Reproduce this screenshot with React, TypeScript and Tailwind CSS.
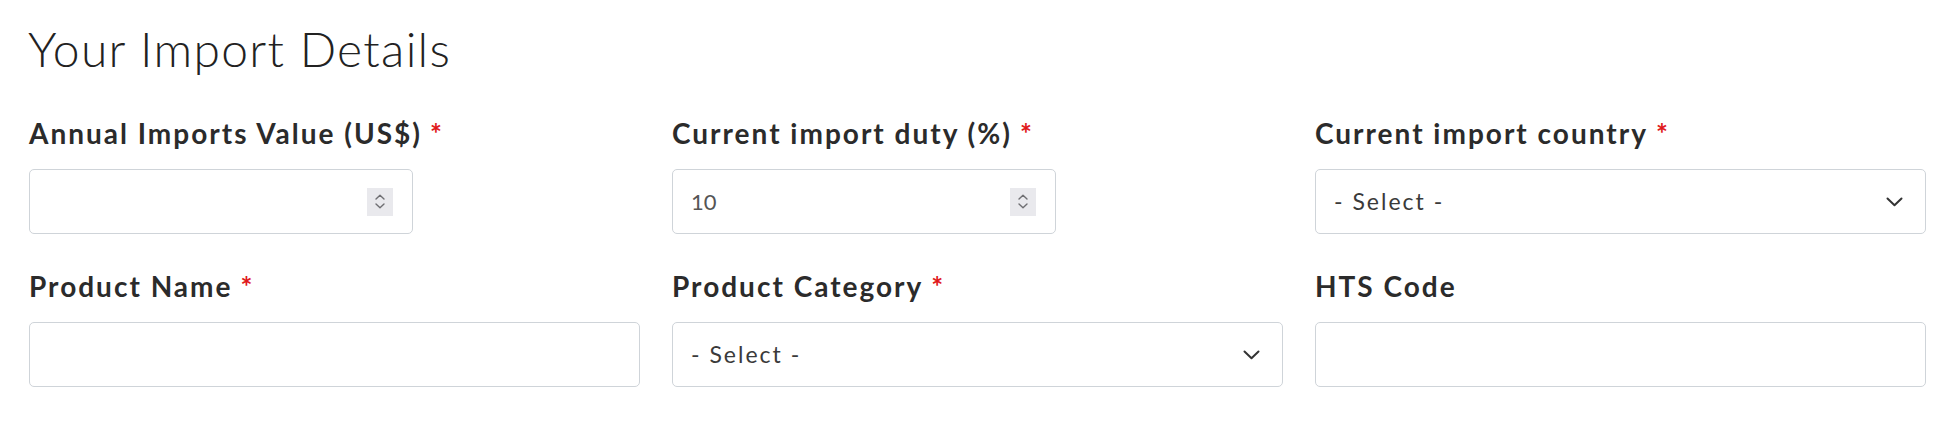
import React from "react";

const font = { fontFamily: "Lato, 'Open Sans', sans-serif" };

function Label({ text, required }: { text: string; required?: boolean }) {
  return (
    <div className="h-[28px] text-[28px] leading-[28px] font-bold tracking-[2px] text-[#2b2b2b] whitespace-nowrap">
      {text}
      {required && <span className="text-[#e0181b] ml-[8px] tracking-normal">*</span>}
    </div>
  );
}

function Spinner() {
  return (
    <div className="absolute right-[19px] top-1/2 -translate-y-1/2 w-[26px] h-[28px] bg-[#e9e9ed] flex flex-col items-center justify-center gap-[3px]">
      <svg width="10" height="6" viewBox="0 0 10 6" fill="none">
        <path d="M1 5L5 1.2L9 5" stroke="#6f6f73" strokeWidth="1.4" strokeLinecap="round" strokeLinejoin="round" />
      </svg>
      <svg width="10" height="6" viewBox="0 0 10 6" fill="none">
        <path d="M1 1L5 4.8L9 1" stroke="#6f6f73" strokeWidth="1.4" strokeLinecap="round" strokeLinejoin="round" />
      </svg>
    </div>
  );
}

function Box({ children, className = "" }: { children?: React.ReactNode; className?: string }) {
  return (
    <div
      className={
        "relative h-[65px] border border-[#cfd4d9] rounded-[5px] bg-white flex items-center pl-[18px] " +
        className
      }
    >
      {children}
    </div>
  );
}

function Chevron() {
  return (
    <svg className="absolute right-[22px] top-1/2 -translate-y-1/2" width="17" height="10" viewBox="0 0 17 10" fill="none">
      <path d="M1.5 1.5L8.5 8.2L15.5 1.5" stroke="#333" strokeWidth="2" strokeLinecap="round" strokeLinejoin="round" />
    </svg>
  );
}

function SelectText() {
  return <span className="text-[23px] tracking-[2px] text-[#3a3a3a]">- Select -</span>;
}

export default function App() {
  return (
    <div className="w-[1951px] h-[439px] bg-white pl-[29px] pr-[25px]" style={font}>
      <h2 className="pt-[25px] h-[73px] text-[48px] leading-[48px] font-light tracking-[1.3px] text-[#222] -ml-[1px]">
        Your Import Details
      </h2>
      <div className="grid grid-cols-3 gap-x-[32px] mt-[46px]">
        <div>
          <Label text="Annual Imports Value (US$)" required />
          <Box className="mt-[22px] w-[384px]">
            <Spinner />
          </Box>
        </div>
        <div>
          <Label text="Current import duty (%)" required />
          <Box className="mt-[22px] w-[384px] text-[22px] text-[#555]">
            10
            <Spinner />
          </Box>
        </div>
        <div>
          <Label text="Current import country" required />
          <Box className="mt-[22px]">
            <SelectText />
            <Chevron />
          </Box>
        </div>
      </div>
      <div className="grid grid-cols-3 gap-x-[32px] mt-[38px]">
        <div>
          <Label text="Product Name" required />
          <Box className="mt-[22px]" />
        </div>
        <div>
          <Label text="Product Category" required />
          <Box className="mt-[22px]">
            <SelectText />
            <Chevron />
          </Box>
        </div>
        <div>
          <Label text="HTS Code" />
          <Box className="mt-[22px]" />
        </div>
      </div>
    </div>
  );
}
